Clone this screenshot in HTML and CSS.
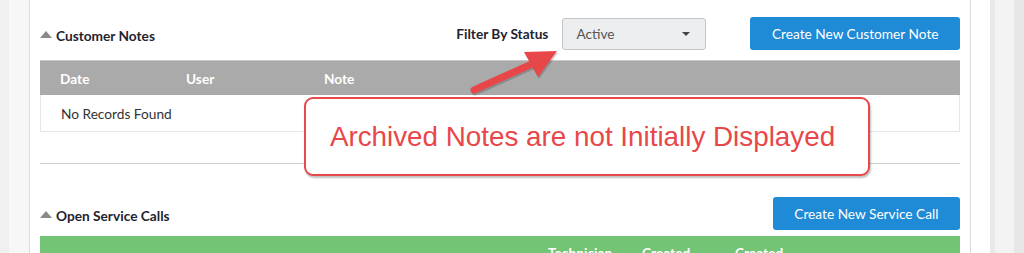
FILE: index.html
```html
<!DOCTYPE html>
<html lang="en">
<head>
<meta charset="UTF-8" />
<title>Customer Notes</title>
<link rel="stylesheet" href="styles.css">
</head>
<body>
<div class="frame">
  <div class="rail"></div>
  <div class="gutter"></div>

  <div class="panel">
    <!-- Customer notes -->
    <div class="section-head">
      <h2 class="section-title"><span class="caret-up"></span>Customer Notes</h2>
      <label class="filter-label">Filter By Status</label>
      <div class="select">
        <span>Active</span>
        <span class="caret-down"></span>
      </div>
      <button class="btn-blue">Create New Customer Note</button>
    </div>

    <div class="grid-table notes">
      <div class="thead gray">
        <div>Date</div>
        <div>User</div>
        <div>Note</div>
      </div>
      <div class="empty-row">No Records Found</div>
    </div>

    <hr class="divider">

    <!-- Open service calls -->
    <div class="section-head second">
      <h2 class="section-title"><span class="caret-up"></span>Open Service Calls</h2>
      <button class="btn-blue">Create New Service Call</button>
    </div>

    <div class="grid-table calls">
      <div class="thead green">
        <div></div>
        <div>Technician</div>
        <div>Created By</div>
        <div>Created Date</div>
        <div></div>
      </div>
    </div>

    <!-- annotation overlay -->
    <svg class="arrow" width="105" height="60" viewBox="0 0 105 60">
      <g class="arrow-shadow" transform="translate(1,2)">
        <line x1="14" y1="50" x2="74" y2="23" stroke-width="7" stroke-linecap="round" />
        <polygon points="64,12 97,11 78,37" />
      </g>
      <g class="arrow-body">
        <line x1="14" y1="50" x2="74" y2="23" stroke-width="7" stroke-linecap="round" />
        <polygon points="64,12 97,11 78,37" />
      </g>
    </svg>

    <div class="callout">Archived Notes are not Initially Displayed</div>
  </div>

  <div class="side-white"></div>
  <div class="scroll">
    <div class="scroll-a"></div>
    <div class="scroll-b"></div>
    <div class="scroll-c"></div>
  </div>
</div>
</body>
</html>
```

FILE: styles.css
```css
* {
  box-sizing: border-box;
}
body {
  margin: 0;
  background: #f2f2f2;
  font-family: Lato, 'Open Sans', sans-serif;
  font-size: 13.7px;
  color: #222;
  overflow: hidden;
}

.frame {
  display: flex;
  height: 253px;
}

.rail {
  width: 9px;
  background: #f0f0f0;
}
.gutter {
  width: 20px;
  background: #f7f7f7;
}

.panel {
  position: relative;
  width: 942px;
  background: #fff;
  border-left: 1px solid #dcdcdc;
  border-right: 1px solid #dcdcdc;
  padding: 17px 10px 0 10px;
}

.side-white {
  width: 19px;
  background: #fff;
}
.scroll {
  display: flex;
  flex: 1;
}
.scroll-a {
  width: 5px;
  background: #e9e9e9;
}
.scroll-b {
  width: 19px;
  background: #f3f3f3;
}
.scroll-c {
  flex: 1;
  background: #e7e7e7;
}

/* section headers */
.section-head {
  display: flex;
  align-items: center;
  height: 33px;
}
.section-head.second {
  margin-top: 33px;
}
.section-title {
  flex: 1;
  margin: 4px 0 0 0;
  font-size: 13.7px;
  font-weight: 700;
  color: #1f2430;
  display: flex;
  align-items: center;
}
.caret-up {
  width: 0;
  height: 0;
  border-left: 6px solid transparent;
  border-right: 6px solid transparent;
  border-bottom: 7px solid #8a8a8a;
  margin: 0 4px 2px 0;
}

.filter-label {
  font-weight: 700;
  color: #1f2430;
  margin-right: 14px;
  margin-top: -1px;
}

.select {
  display: flex;
  align-items: center;
  justify-content: space-between;
  width: 144px;
  height: 32px;
  padding: 0 15px 0 13px;
  margin-right: 44px;
  background: #eceeef;
  border: 1px solid #c4c4c4;
  border-radius: 3px;
  color: #555;
}
.caret-down {
  width: 0;
  height: 0;
  border-left: 4px solid transparent;
  border-right: 4px solid transparent;
  border-top: 4px solid #444;
}

.btn-blue {
  height: 33px;
  padding: 0 21.5px;
  border: none;
  border-radius: 3px;
  background: #1f8ad6;
  color: #fff;
  font-family: Lato, 'Open Sans', sans-serif;
  font-size: 13.7px;
}

/* tables */
.grid-table.notes {
  margin-top: 10px;
  border: 1px solid #e3e6ea;
  border-top: none;
}
.grid-table.calls {
  margin-top: 6px;
}

.thead {
  display: grid;
  color: #fff;
  font-weight: 700;
}
.thead.gray {
  grid-template-columns: 126px 138px 1fr;
  align-items: center;
  height: 35px;
  padding-left: 20px;
  margin: 0 -1px;
  background: #aaaaaa;
  border-top: 1px solid #c8c8c8;
}
.thead.green {
  grid-template-columns: 488px 94px 93px 93px 1fr;
  padding: 9px 0 10px 20px;
  background: #74c476;
  line-height: 16px;
}
.thead.green div {
  width: 60px;
}

.empty-row {
  height: 36px;
  padding-left: 20px;
  display: flex;
  align-items: center;
  color: #333;
}

.divider {
  margin: 31px 0 0 0;
  border: none;
  border-top: 1px solid #cfcfcf;
}

/* annotation */
.callout {
  position: absolute;
  left: 274px;
  top: 97px;
  width: 566px;
  height: 79px;
  display: flex;
  align-items: center;
  justify-content: center;
  padding-right: 9px;
  background: #fff;
  border: 2px solid #e8494b;
  border-radius: 9px;
  box-shadow: 1px 2px 2px rgba(0, 0, 0, 0.25);
  font-family: 'Liberation Sans', Arial, sans-serif;
  font-size: 27.8px;
  color: #e8474a;
}

.arrow {
  position: absolute;
  left: 430px;
  top: 40px;
}
.arrow-body line {
  stroke: #e8474a;
}
.arrow-body polygon {
  fill: #e8474a;
}
.arrow-shadow line {
  stroke: rgba(0, 0, 0, 0.18);
}
.arrow-shadow polygon {
  fill: rgba(0, 0, 0, 0.18);
}
```
